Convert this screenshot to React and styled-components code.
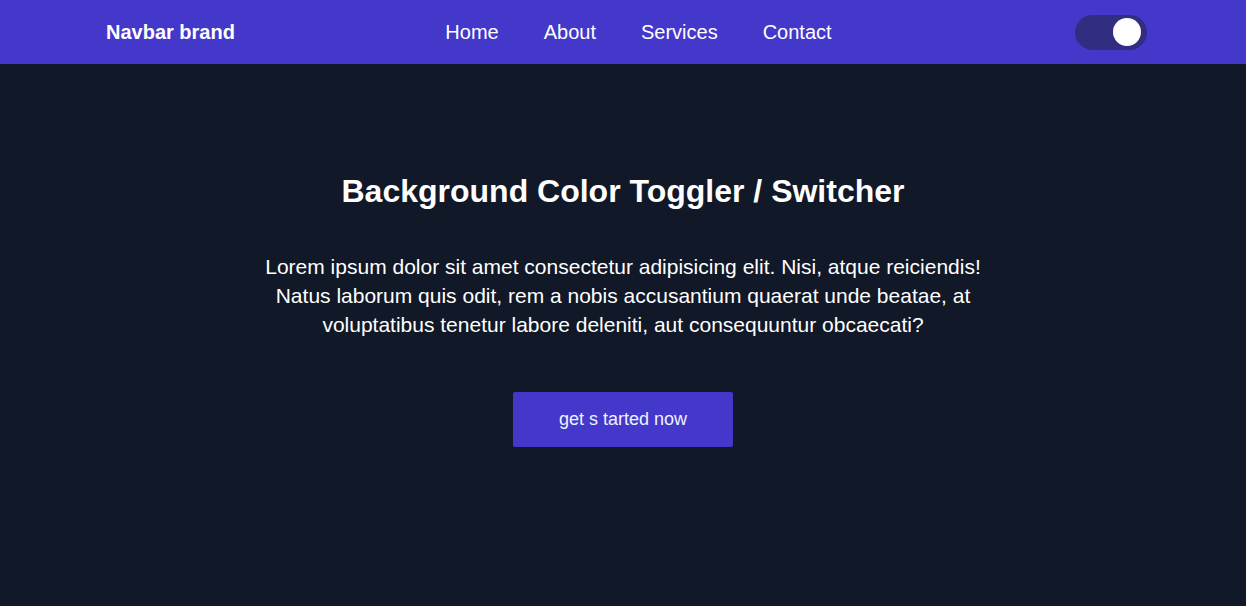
import { useState } from 'react';
import styled, { createGlobalStyle } from 'styled-components';

const GlobalStyle = createGlobalStyle`
  html, body {
    margin: 0;
    padding: 0;
    background: #111827;
    font-family: "Liberation Sans", Arial, sans-serif;
  }
`;

const Page = styled.div`
  min-height: 606px;
  background: #111827;
  color: #ffffff;
`;

const Navbar = styled.nav`
  height: 64px;
  background: #4338ca;
  display: flex;
  align-items: center;
  justify-content: space-between;
  padding: 0 99px 0 106px;
  box-sizing: border-box;
`;

const Brand = styled.a`
  font-size: 20px;
  font-weight: 700;
  color: #ffffff;
  text-decoration: none;
`;

const Links = styled.ul`
  display: flex;
  gap: 45px;
  list-style: none;
  margin: 0 33px 0 0;
  padding: 0;
`;

const NavLink = styled.a`
  font-size: 20px;
  color: #ffffff;
  text-decoration: none;
`;

const Track = styled.button`
  width: 72px;
  height: 35px;
  border: none;
  border-radius: 18px;
  background: #312e81;
  display: flex;
  align-items: center;
  justify-content: ${({ $on }) => ($on ? 'flex-end' : 'flex-start')};
  padding: 0 6px;
  box-sizing: border-box;
  cursor: pointer;
`;

const Knob = styled.span`
  width: 28px;
  height: 28px;
  border-radius: 50%;
  background: #ffffff;
`;

const Hero = styled.main`
  display: flex;
  flex-direction: column;
  align-items: center;
  text-align: center;
  padding-top: 109px;
`;

const Title = styled.h1`
  font-size: 32px;
  font-weight: 700;
  line-height: 37px;
  margin: 0 0 42px;
`;

const Text = styled.p`
  font-size: 21px;
  line-height: 29px;
  max-width: 740px;
  margin: 0 0 53px;
`;

const Button = styled.button`
  font-family: inherit;
  font-size: 18px;
  line-height: 21px;
  color: #eef2ff;
  background: #4338ca;
  border: none;
  border-radius: 2px;
  padding: 17px 46px;
  cursor: pointer;
`;

export default function App() {
  const [dark, setDark] = useState(true);

  return (
    <Page>
      <GlobalStyle />
      <Navbar>
        <Brand href="#">Navbar brand</Brand>
        <Links>
          <li><NavLink href="#">Home</NavLink></li>
          <li><NavLink href="#">About</NavLink></li>
          <li><NavLink href="#">Services</NavLink></li>
          <li><NavLink href="#">Contact</NavLink></li>
        </Links>
        <Track $on={dark} onClick={() => setDark(!dark)} aria-label="toggle theme">
          <Knob />
        </Track>
      </Navbar>
      <Hero>
        <Title>Background Color Toggler / Switcher</Title>
        <Text>
          Lorem ipsum dolor sit amet consectetur adipisicing elit. Nisi, atque
          reiciendis! Natus laborum quis odit, rem a nobis accusantium quaerat
          unde beatae, at voluptatibus tenetur labore deleniti, aut consequuntur
          obcaecati?
        </Text>
        <Button>get s tarted now</Button>
      </Hero>
    </Page>
  );
}
